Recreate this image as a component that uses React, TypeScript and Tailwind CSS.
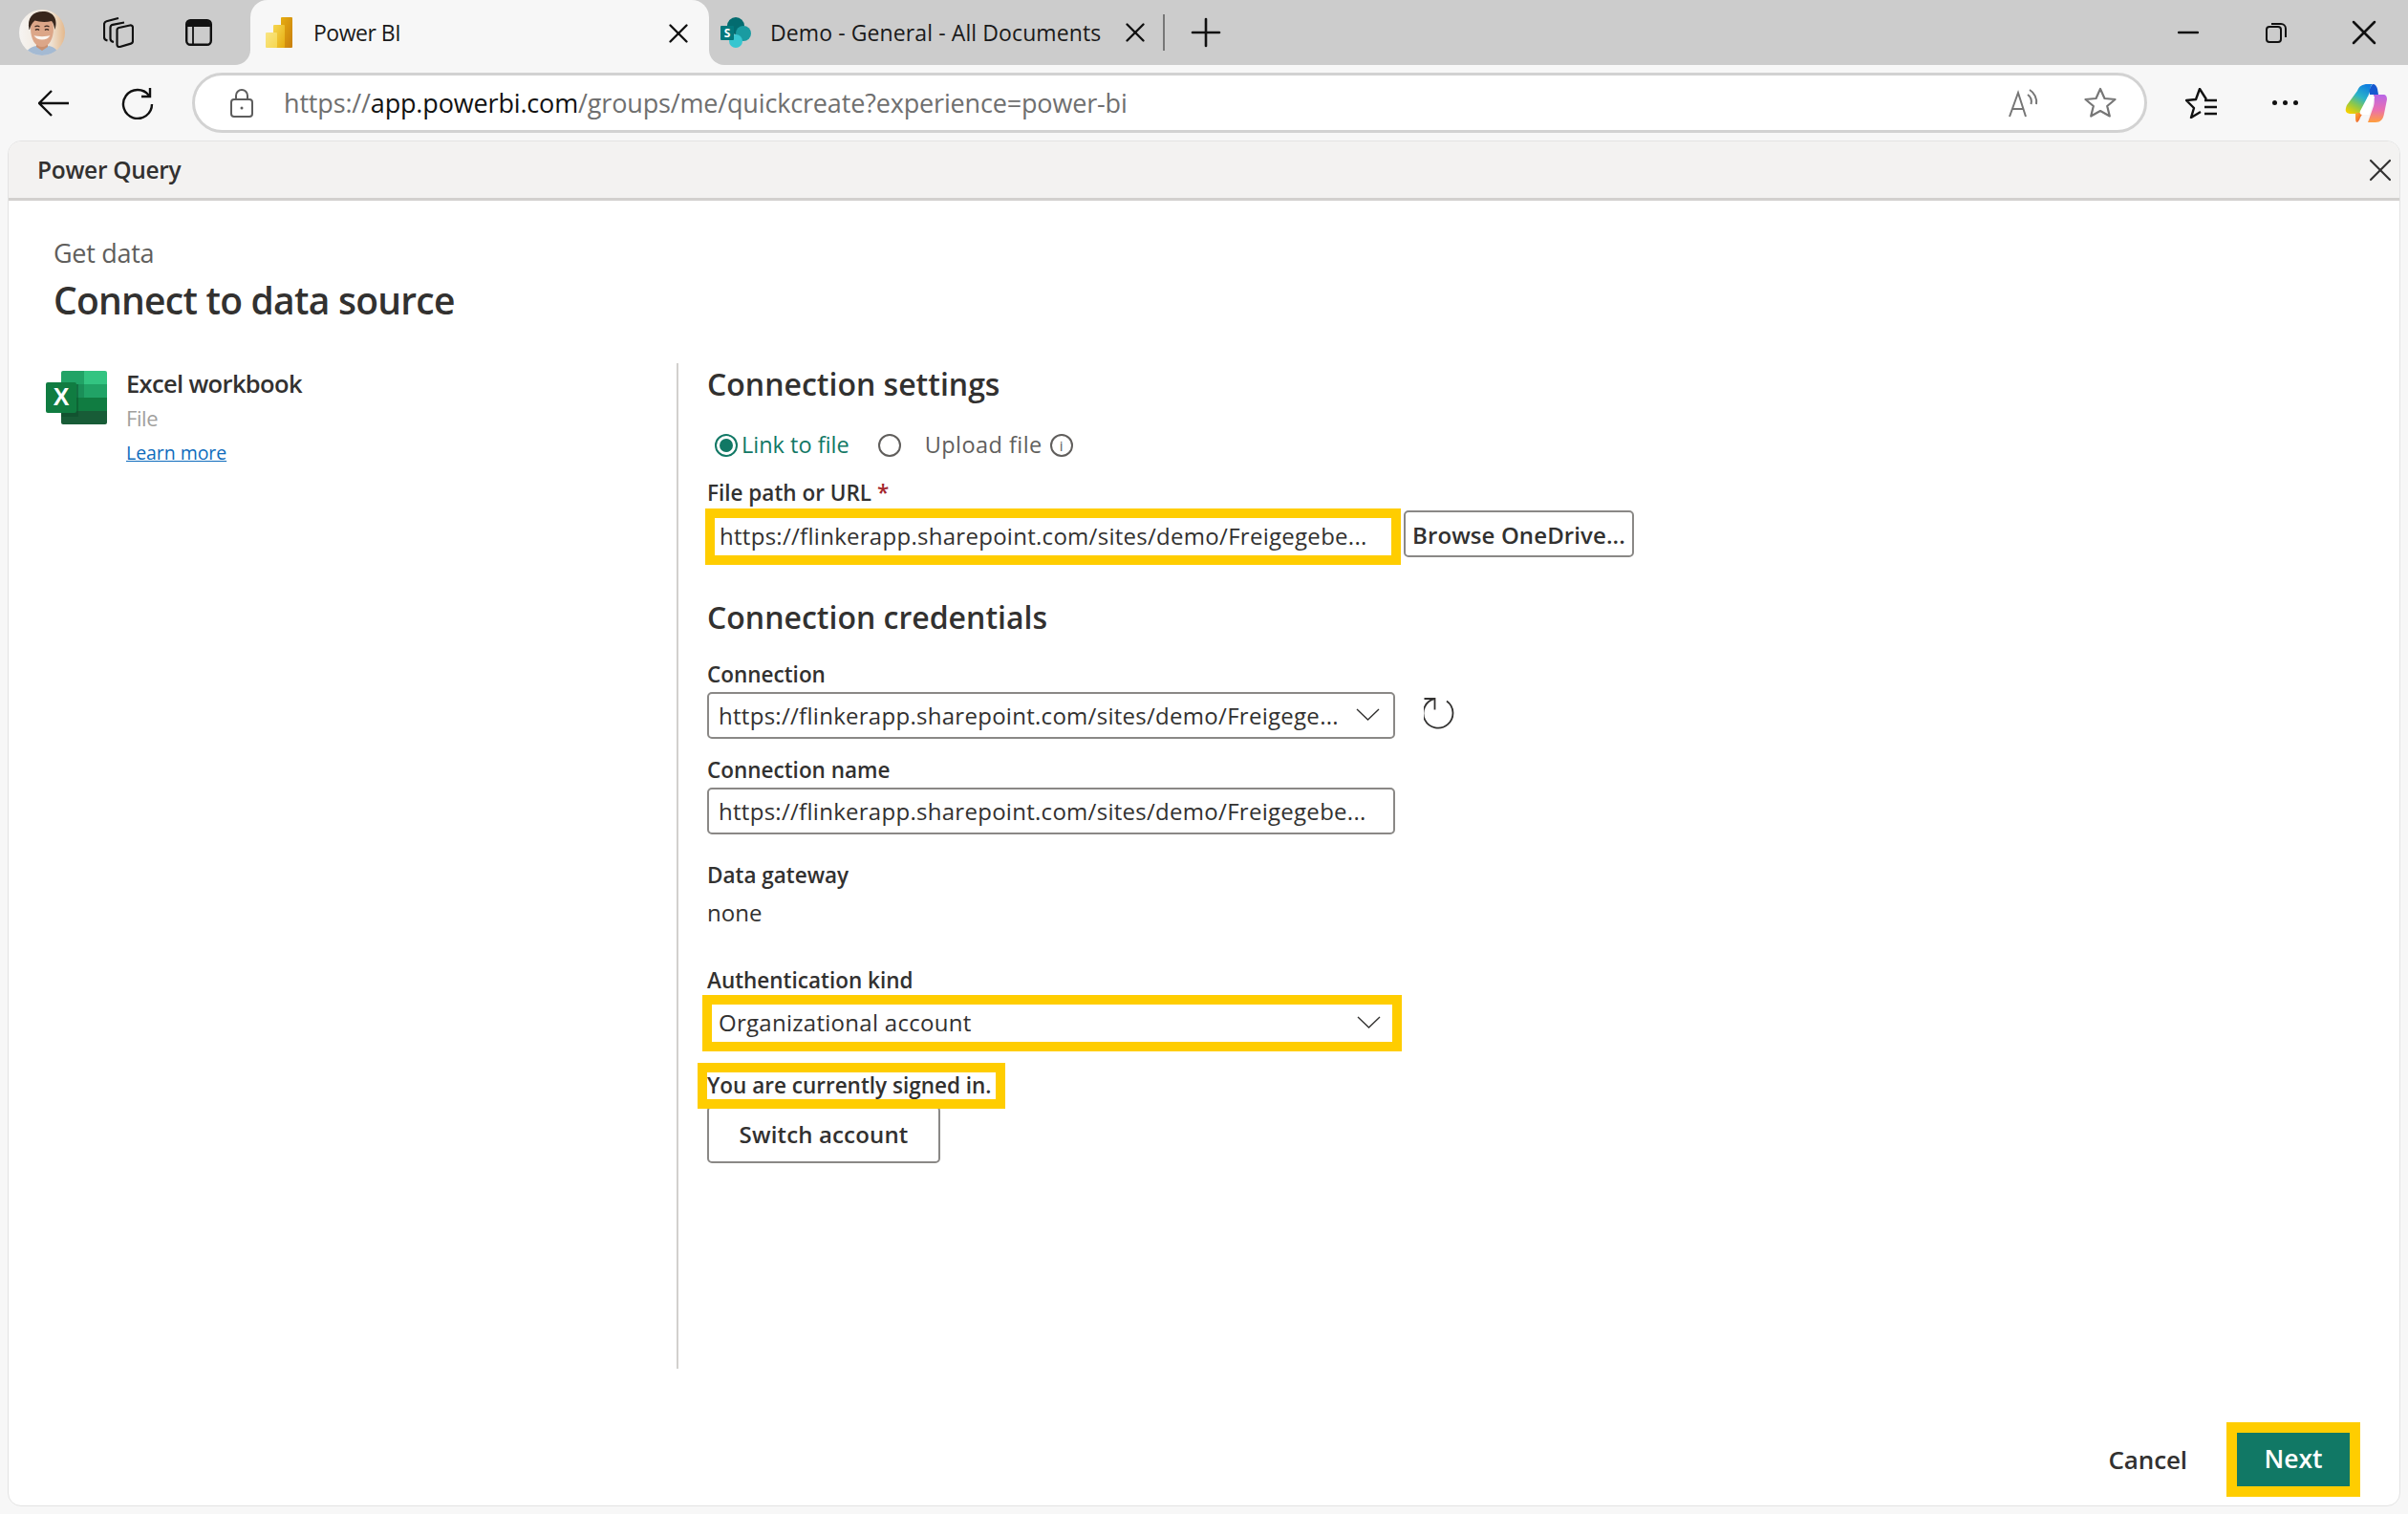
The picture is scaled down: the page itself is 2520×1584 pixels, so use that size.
import React from 'react';
import { X, Plus, Minus } from 'lucide-react';

const Avatar = () => (
  <svg width="48" height="48" viewBox="0 0 48 48" className="shrink-0">
    <defs>
      <clipPath id="av"><circle cx="24" cy="24" r="24" /></clipPath>
      <linearGradient id="avbg" x1="0" x2="1" y1="0" y2="0">
        <stop offset="0" stopColor="#f6f4f2" />
        <stop offset="0.7" stopColor="#efe2d2" />
        <stop offset="1" stopColor="#e4b88c" />
      </linearGradient>
      <filter id="avblur"><feGaussianBlur stdDeviation="0.5" /></filter>
    </defs>
    <g clipPath="url(#av)">
      <rect width="48" height="48" fill="url(#avbg)" />
      <g filter="url(#avblur)">
        <path d="M6 48c1-5 6-9 12-10l6 4 7-4c6 1 10 5 11 10z" fill="#a4bad3" />
        <path d="M18 32h12v7l-6 4-6-4z" fill="#c9906f" />
        <path d="M12 20c0 11 5 19 12 19s12-8 12-19-5-14-12-14-12 3-12 14z" fill="#dca688" />
        <path d="M10.500 21C8 9 14 2 25 2s16 8 12.500 19c-1-4-1.500-7-3.500-9-6 1.500-13 1-17.500-.5-2.500 2-4.500 5-5.500 9.500z" fill="#37271f" />
        <path d="M15.500 27c3 6 14 6 17 0-3 1.500-14 1.500-17 0z" fill="#fbf5f0" />
        <path d="M17 21.500c1-1 3-1 4 0M27 21.500c1-1 3-1 4 0" stroke="#33241e" strokeWidth="1.500" fill="none" />
        <path d="M16.500 18c1.500-1 3.500-1 5 0M26.500 18c1.500-1 3.500-1 5 0" stroke="#3a2a22" strokeWidth="1.200" fill="none" />
      </g>
    </g>
  </svg>
);

const PowerBiIcon = () => (
  <svg width="28" height="32" viewBox="0 0 28 32" className="shrink-0">
    <defs>
      <linearGradient id="pb1" x1="0" x2="1" y1="0" y2="1"><stop offset="0" stopColor="#e6ad10" /><stop offset="1" stopColor="#c87e0e" /></linearGradient>
      <linearGradient id="pb2" x1="0" x2="1" y1="0" y2="1"><stop offset="0" stopColor="#f6d751" /><stop offset="1" stopColor="#e6ad10" /></linearGradient>
      <linearGradient id="pb3" x1="0" x2="1" y1="0" y2="1"><stop offset="0" stopColor="#f9e583" /><stop offset="1" stopColor="#f6d751" /></linearGradient>
    </defs>
    <rect x="16" y="0" width="12" height="32" rx="1" fill="url(#pb1)" />
    <rect x="8" y="8" width="12" height="24" rx="1" fill="url(#pb2)" />
    <rect x="0" y="16" width="12" height="16" rx="1" fill="url(#pb3)" />
  </svg>
);

const SharePointIcon = () => (
  <svg width="32" height="32" viewBox="0 0 32 32" className="shrink-0">
    <circle cx="16" cy="9" r="9" fill="#036c70" />
    <circle cx="24" cy="17" r="8" fill="#1a9ba1" />
    <circle cx="16" cy="25" r="7" fill="#37c6d0" />
    <rect x="0" y="9" width="14" height="15" rx="1" fill="#03787c" />
    <text x="7" y="21" textAnchor="middle" fontSize="12" fontWeight="700" fill="#fff" fontFamily="'Open Sans', sans-serif">S</text>
  </svg>
);

const ExcelIcon = () => (
  <svg width="64" height="56" viewBox="0 0 64 56" className="shrink-0">
    <path d="M16 2a2 2 0 0 1 2-2h22v14H16z" fill="#21a366" />
    <path d="M40 0h22a2 2 0 0 1 2 2v12H40z" fill="#33c481" />
    <rect x="16" y="14" width="24" height="14" fill="#1a8f58" />
    <rect x="40" y="14" width="24" height="14" fill="#21a366" />
    <rect x="16" y="28" width="24" height="14" fill="#107c41" />
    <rect x="40" y="28" width="24" height="14" fill="#107c41" />
    <path d="M16 42h48v12a2 2 0 0 1-2 2H18a2 2 0 0 1-2-2z" fill="#185c37" />
    <rect x="16" y="14" width="18" height="34" fill="#0b4a29" opacity="0.45" />
    <rect x="0" y="12" width="32" height="32" rx="2" fill="#107c41" />
    <text x="16" y="36" textAnchor="middle" fontSize="25" fontWeight="700" fill="#fff" fontFamily="'Liberation Sans', sans-serif">X</text>
  </svg>
);

const CopilotIcon = () => (
  <svg width="44" height="40" viewBox="0 0 44 40" className="shrink-0">
    <defs>
      <linearGradient id="co1" x1="0.7" x2="0.2" y1="0" y2="1">
        <stop offset="0" stopColor="#0f7fe0" />
        <stop offset="0.4" stopColor="#2bb4c8" />
        <stop offset="0.7" stopColor="#8cc84b" />
        <stop offset="1" stopColor="#f4d000" />
      </linearGradient>
      <linearGradient id="co2" x1="0.5" x2="0.5" y1="0" y2="1">
        <stop offset="0" stopColor="#b866e8" />
        <stop offset="0.55" stopColor="#ea6fb0" />
        <stop offset="1" stopColor="#ff9f3c" />
      </linearGradient>
      <linearGradient id="co3" x1="0" x2="1" y1="0" y2="1">
        <stop offset="0" stopColor="#ffb02e" />
        <stop offset="1" stopColor="#e8452f" />
      </linearGradient>
    </defs>
    <path d="M24 0c-6 0-9 2-11 7L2 22c-2 5-2 8 3 9h12L26 8c1-3 0-6 3-8z" fill="url(#co1)" />
    <path d="M29 0c3 0 4 2 5 5l1 6h-9c-1-4 0-8 3-11z" fill="#1558d0" />
    <path d="M30 11h10c3 0 4 2 4 5l-3 15c-1 6-4 9-9 9h-8l6-17c1-4 1-8 0-12z" fill="url(#co2)" />
    <path d="M11 30h8l-3 5c-1 3-2 4-3 5-2 0-2-3-2-10z" fill="url(#co3)" />
    <path d="M24 13h7l-6 19h-7c-2 0-3-2-2-4z" fill="#fff" />
  </svg>
);

const Field = ({ children }: { children: React.ReactNode }) => (
  <div className="w-full h-[49px] shrink-0 bg-white border-2 border-[#8a8886] rounded-[5px] flex items-center pl-[10px] pr-[14px] text-[24px] text-[#323130] tracking-[0.28px]">
    {children}
  </div>
);

const Chevron = () => (
  <svg width="25" height="13" viewBox="0 0 25 13" fill="none" stroke="#323130" strokeWidth="1.400" className="shrink-0 -mt-[3px]">
    <path d="M1 1l11.500 11L24 1" />
  </svg>
);

const Label = ({ children }: { children: React.ReactNode }) => (
  <div className="h-[30px] leading-[30px] text-[22.5px] font-semibold text-[#323130]">{children}</div>
);

const Heading = ({ children }: { children: React.ReactNode }) => (
  <div className="h-[46px] leading-[46px] -mt-[1px] mb-[1px] text-[32px] font-semibold text-[#323130]">{children}</div>
);

export default function App() {
  return (
    <div className="w-[2520px] h-[1584px] bg-[#f7f7f7] flex flex-col overflow-hidden font-['Open_Sans','Liberation_Sans',sans-serif]">
      {/* browser tab strip */}
      <div className="h-[68px] shrink-0 bg-[#cccccc] flex items-center text-[#1a1a1a]">
        <div className="ml-[20px]"><Avatar /></div>
        <svg width="32" height="32" viewBox="0 0 32 32" fill="none" stroke="#111" strokeWidth="2.200" className="ml-[40px] shrink-0">
          <path d="M16.500 11L28 8.500c1.500-.3 3 .7 3 2.300V25c0 1.300-.8 2.300-2 2.600L17.500 31c-1.700.4-3-.7-3-2.300V13.500c0-1.200.8-2.200 2-2.500z" />
          <path d="M11 26c-2.500-.5-3.500-1.500-3.500-3.500V11c0-1.500 1-2.800 2.500-3.200L22 5.500" />
          <path d="M4.500 24.500C2.500 24 1 23 1 21V7.500C1 6 2 4.700 3.500 4.300L16 1" />
        </svg>
        <svg width="28" height="28" viewBox="0 0 28 28" className="ml-[54px] shrink-0">
          <rect x="1.200" y="1.200" width="25.600" height="25.600" rx="4" fill="none" stroke="#111" strokeWidth="2.400" />
          <path d="M2 5a3 3 0 0 1 3-3h18a3 3 0 0 1 3 3v3H2z" fill="#111" />
          <path d="M8 8v18" stroke="#111" strokeWidth="1.800" />
        </svg>
        <div className="relative ml-[40px] w-[480px] h-[68px] shrink-0 bg-[#f7f7f7] rounded-t-[18px] flex items-center">
          <div className="absolute left-[-16px] bottom-0 w-[16px] h-[16px] bg-[#f7f7f7]"><div className="w-full h-full bg-[#cccccc] rounded-br-[16px]" /></div>
          <div className="absolute right-[-16px] bottom-0 w-[16px] h-[16px] bg-[#f7f7f7]"><div className="w-full h-full bg-[#cccccc] rounded-bl-[16px]" /></div>
          <div className="ml-[16px]"><PowerBiIcon /></div>
          <span className="ml-[22px] text-[23px] tracking-[-0.5px] text-[#1a1a1a]">Power BI</span>
          <X size={34} strokeWidth={1.700} className="absolute left-[431px] top-[18px] text-[#111]" />
        </div>
        <div className="ml-[12px]"><SharePointIcon /></div>
        <span className="ml-[20px] w-[345px] shrink-0 text-[23px] tracking-[0.1px] whitespace-nowrap">Demo - General - All Documents</span>
        <X size={34} strokeWidth={1.700} className="ml-[20px] shrink-0 text-[#111]" />
        <div className="ml-[12px] w-[2px] h-[38px] bg-[#777]" />
        <Plus size={48} strokeWidth={1.300} className="ml-[19px] shrink-0 text-[#111]" />
        <div className="flex-1" />
        <Minus size={34} strokeWidth={1.700} className="shrink-0 text-[#111]" />
        <svg width="22" height="22" viewBox="0 0 22 22" fill="none" stroke="#111" strokeWidth="2" className="ml-[64px] shrink-0">
          <rect x="1" y="5" width="15" height="16" rx="3" />
          <path d="M6 2h10a5 5 0 0 1 5 5v9" />
        </svg>
        <X size={44} strokeWidth={1.400} className="ml-[59px] mr-[24px] shrink-0 text-[#111]" />
      </div>

      {/* address bar row */}
      <div className="h-[79px] shrink-0 flex items-center">
        <svg width="32" height="28" viewBox="0 0 32 28" fill="none" stroke="#111" strokeWidth="2.400" className="ml-[40px] shrink-0">
          <path d="M14 1L1 14l13 13M1 14h31" />
        </svg>
        <svg width="34" height="34" viewBox="0 0 34 34" fill="none" stroke="#111" strokeWidth="2.400" className="ml-[55px] shrink-0">
          <path d="M29 9a15 15 0 1 0 3 9" />
          <path d="M21 10h9V1" />
        </svg>
        <div className="ml-[40px] w-[2046px] h-[63px] shrink-0 bg-white border-[3px] border-[#d2d2d2] rounded-full flex items-center">
          <svg width="24" height="30" viewBox="0 0 24 30" fill="none" stroke="#5d5d5d" strokeWidth="2" className="ml-[37px] shrink-0">
            <rect x="1" y="11" width="22" height="18" rx="3" />
            <path d="M6 11V7a6 6 0 0 1 12 0v4" />
            <circle cx="12" cy="20" r="1.500" fill="#5d5d5d" stroke="none" />
          </svg>
          <div className="ml-[32px] mt-[2px] text-[27px] tracking-[-0.16px] whitespace-nowrap text-[#6f6f6f]">
            https://<span className="text-[#111]">app.powerbi.com</span>/groups/me/quickcreate?experience=power-bi
          </div>
          <div className="flex-1" />
          <svg width="32" height="30" viewBox="0 0 32 30" fill="none" stroke="#767676" strokeWidth="2" className="shrink-0">
            <path d="M1 29L10 4l8 25M4 21h11" />
            <path d="M20 6c3 2 4.500 6 3.500 10M22 1c5 3 8 9 7 15" />
          </svg>
          <svg width="34" height="32" viewBox="0 0 34 32" fill="none" stroke="#767676" strokeWidth="2.200" strokeLinejoin="round" className="ml-[47px] mr-[29px] -mt-[2px] shrink-0">
            <path d="M17 2l4.500 10 11 1-8.300 7 2.600 10.500L17 25l-9.800 5.500L9.800 20 1.500 13l11-1z" />
          </svg>
        </div>
        <svg width="34" height="32" viewBox="0 0 34 32" fill="none" stroke="#111" strokeWidth="2.400" strokeLinejoin="round" className="ml-[40px] shrink-0">
          <path d="M22 12L15 1 11 12 1 13l8 8-3 10 10-6" />
          <path d="M20 13h13M20 20h13M20 27h13" />
        </svg>
        <div className="ml-[57px] flex gap-[6px] shrink-0">
          <span className="w-[5px] h-[5px] bg-[#111] rounded-full" />
          <span className="w-[5px] h-[5px] bg-[#111] rounded-full" />
          <span className="w-[5px] h-[5px] bg-[#111] rounded-full" />
        </div>
        <div className="ml-[49px]"><CopilotIcon /></div>
      </div>

      {/* power query dialog */}
      <div className="mx-[8px] mb-[8px] flex-1 min-h-0 bg-white rounded-[14px] border border-[#e3e3e3] flex flex-col overflow-hidden">
        <div className="h-[62px] shrink-0 bg-[#f3f2f1] border-b-[3px] border-[#d2d0ce] flex items-center justify-between pl-[30px] pr-0">
          <span className="mt-[2px] text-[24.5px] font-semibold text-[#323130] tracking-[-0.3px]">Power Query</span>
          <X size={40} strokeWidth={1.300} className="text-[#323130]" />
        </div>

        <div className="pl-[47px] pt-[37px]">
          <div className="h-[36px] leading-[36px] text-[27px] text-[#605e5c] tracking-[-0.3px]">Get data</div>
          <div className="mt-[6px] mb-[1px] h-[50px] leading-[50px] text-[39px] font-semibold text-[#323130] tracking-[-0.75px]">Connect to data source</div>
        </div>

        <div className="mt-[40px] h-[1052px] shrink-0 flex">
          <div className="w-[699px] shrink-0 pl-[39px] flex items-start gap-[20px]">
            <div className="mt-[8px]"><ExcelIcon /></div>
            <div className="mt-[5px] flex flex-col">
              <div className="h-[32px] leading-[32px] text-[25.5px] font-semibold text-[#323130] tracking-[-0.65px]">Excel workbook</div>
              <div className="mt-[5px] h-[30px] leading-[30px] text-[22px] text-[#a19f9d] tracking-[-0.4px]">File</div>
              <a href="#" className="mt-[8px] h-[28px] leading-[28px] text-[19.5px] text-[#0f6cbd] underline tracking-[-0.05px]">Learn more</a>
            </div>
          </div>

          <div className="w-[2px] bg-[#d2d0ce] shrink-0" />

          <div className="pl-[30px] w-[1100px] flex flex-col">
            <Heading>Connection settings</Heading>

            <div className="mt-[25px] h-[30px] flex items-center text-[23.5px]">
              <span className="ml-[8px] w-[24px] h-[24px] rounded-full border-2 border-[#117865] flex items-center justify-center shrink-0">
                <span className="w-[14px] h-[14px] rounded-full bg-[#117865]" />
              </span>
              <span className="ml-[4px] text-[#117865]">Link to file</span>
              <span className="ml-[30px] w-[24px] h-[24px] rounded-full border-2 border-[#605e5c] shrink-0" />
              <span className="ml-[25px] text-[#605e5c] tracking-[0.45px]">Upload file</span>
              <span className="ml-[8px] w-[24px] h-[24px] rounded-full border-2 border-[#605e5c] flex items-center justify-center text-[15px] text-[#605e5c] shrink-0">i</span>
            </div>

            <div className="mt-[20px]"><Label>File path or URL <span className="text-[#a4262c]">*</span></Label></div>

            <div className="mt-[1px] flex items-start">
              <div className="-ml-[2px] w-[728px] h-[59px] shrink-0 border-[10px] border-[#ffcd00] bg-white flex items-center pl-[5px] pb-[2px] text-[24px] text-[#323130] tracking-[0.28px] whitespace-nowrap">
                https://flinkerapp.sharepoint.com/sites/demo/Freigegebe...
              </div>
              <button className="ml-[3px] mt-[2px] w-[241px] h-[49px] bg-white border-2 border-[#8a8886] rounded-[5px] pt-[2px] text-[24px] font-semibold text-[#323130] tracking-[0.1px] whitespace-nowrap">Browse OneDrive...</button>
            </div>

            <div className="mt-[33px]"><Heading>Connection credentials</Heading></div>

            <div className="mt-[21px]"><Label>Connection</Label></div>
            <div className="mt-[3px] flex items-center">
              <div className="w-[720px] shrink-0">
                <Field>
                  <span className="flex-1 whitespace-nowrap">https://flinkerapp.sharepoint.com/sites/demo/Freigege...</span>
                  <Chevron />
                </Field>
              </div>
              <svg width="34" height="34" viewBox="0 0 34 34" fill="none" stroke="#323130" strokeWidth="1.800" className="ml-[30px] -mt-[3px] shrink-0">
                <path d="M24 3.500A15.500 15.500 0 1 1 11.500 1" />
                <path d="M0.500 1H11.500V12.500" />
              </svg>
            </div>

            <div className="mt-[18px]"><Label>Connection name</Label></div>
            <div className="mt-[3px] w-[720px]">
              <Field>
                <span className="whitespace-nowrap">https://flinkerapp.sharepoint.com/sites/demo/Freigegebe...</span>
              </Field>
            </div>

            <div className="mt-[28px] mb-[1px]"><Label>Data gateway</Label></div>
            <div className="mt-[8px] mb-[1px] h-[30px] leading-[30px] text-[24px] text-[#323130]">none</div>

            <div className="mt-[40px]"><Label>Authentication kind</Label></div>
            <div className="-ml-[5px] w-[732px] h-[59px] shrink-0 border-[10px] border-[#ffcd00] bg-white flex items-center pl-[7px] pr-[12px] text-[24px] text-[#323130] tracking-[0.28px]">
              <span className="flex-1 pb-[2px]">Organizational account</span>
              <Chevron />
            </div>

            <div className="relative z-10 mt-[12px] -ml-[10px] w-[322px] h-[48px] shrink-0 border-[10px] border-[#ffcd00] bg-white flex items-center text-[22.5px] font-semibold text-[#323130] whitespace-nowrap">
              You are currently signed in.
            </div>
            <button className="-mt-[3px] w-[244px] h-[60px] shrink-0 bg-white border-2 border-[#8a8886] rounded-[5px] text-[24px] font-semibold text-[#323130] tracking-[0.15px]">Switch account</button>
          </div>
        </div>

        <div className="mt-[56px] flex justify-end items-center pr-[41px]">
          <button className="text-[26px] font-semibold text-[#323130] tracking-[-0.1px]">Cancel</button>
          <div className="ml-[41px] w-[140px] h-[78px] border-[11px] border-[#ffcd00] bg-[#117865] flex items-center justify-center text-[26.5px] font-semibold text-white">Next</div>
        </div>
      </div>
    </div>
  );
}
